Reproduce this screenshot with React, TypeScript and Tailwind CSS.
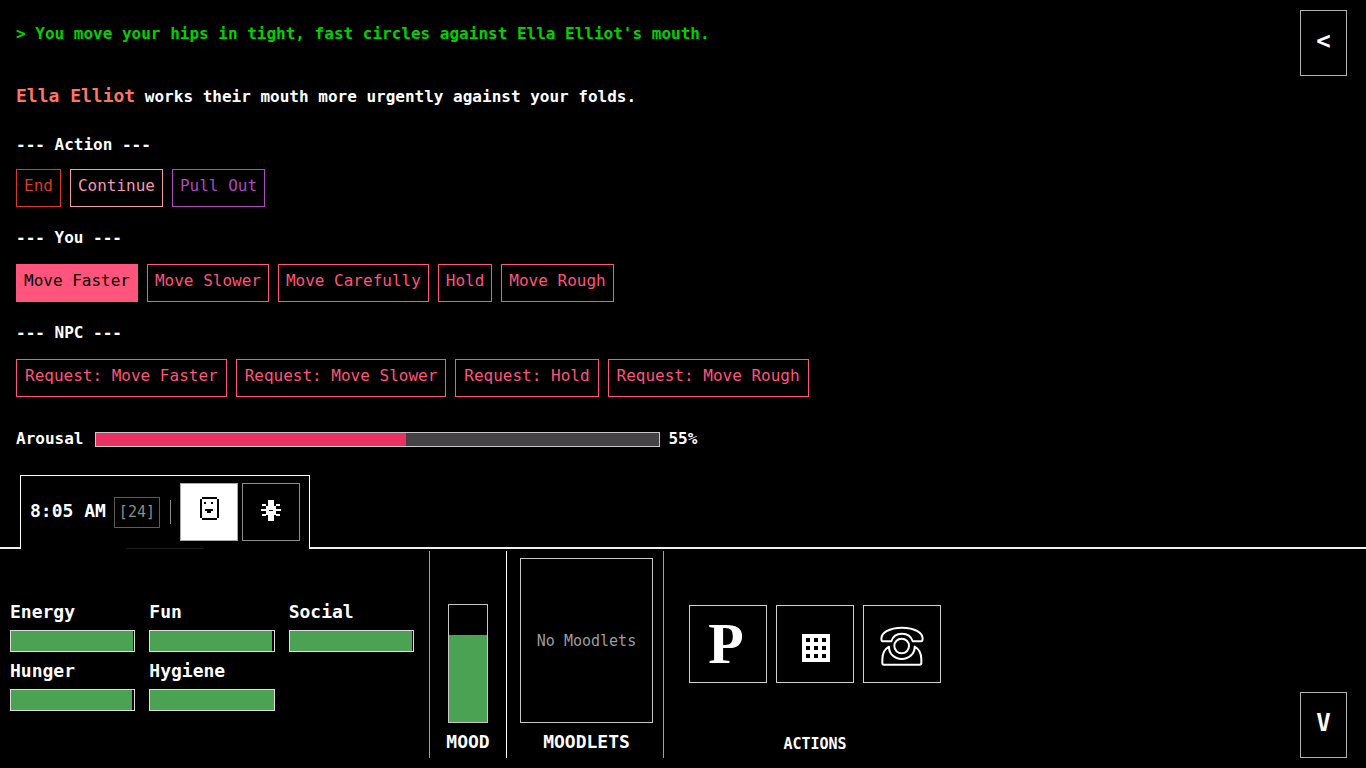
import { useState } from "react";
import clsx from "clsx";

const actions = [
  { label: "End", className: "border-[#d93a2b] text-[#d93a2b]" },
  { label: "Continue", className: "border-[#f29aae] text-[#f29aae]" },
  { label: "Pull Out", className: "border-[#ac4bbd] text-[#ac4bbd]" },
];

const youMoves = ["Move Faster", "Move Slower", "Move Carefully", "Hold", "Move Rough"];

const npcRequests = [
  "Request: Move Faster",
  "Request: Move Slower",
  "Request: Hold",
  "Request: Move Rough",
];

const needs = [
  { name: "Energy", value: 99 },
  { name: "Fun", value: 99 },
  { name: "Social", value: 99 },
  { name: "Hunger", value: 98 },
  { name: "Hygiene", value: 100 },
];

const moveButton = "h-[38px] border pb-1";

function FaceIcon() {
  return (
    <svg width="19" height="23" viewBox="0 0 19 23" shapeRendering="crispEdges" aria-hidden="true">
      <path
        fill="currentColor"
        d="M2 0h15v2h-15z M0 2h2v19h-2z M17 2h2v19h-2z M2 21h15v2h-15z M4 5h2v2h-2z M11 5h2v2h-2z M5 12h8v2h-8z M7 14h4v2h-4z"
      />
    </svg>
  );
}

function GearIcon() {
  return (
    <svg width="20" height="21" viewBox="0 0 20 21" shapeRendering="crispEdges" aria-hidden="true">
      <path
        fill="currentColor"
        fillRule="evenodd"
        d="M7 0h6v6h2v9h-2v6h-6v-6h-2v-9h2z M8 10v1h4v-1z M1 4h4v2h-4z M15 4h4v2h-4z M0 9h5v2h-5z M15 9h5v2h-5z M1 14h4v2h-4z M15 14h4v2h-4z"
      />
    </svg>
  );
}

function GridIcon() {
  return (
    <svg width="28" height="28" viewBox="0 0 7 7" shapeRendering="crispEdges" aria-hidden="true">
      <path
        fill="currentColor"
        d="M0 0h7v1h-7z M0 2h7v1h-7z M0 4h7v1h-7z M0 6h7v1h-7z M0 0h1v7h-1z M2 0h1v7h-1z M4 0h1v7h-1z M6 0h1v7h-1z"
      />
    </svg>
  );
}

function PhoneIcon() {
  return (
    <svg width="44" height="40" viewBox="0 0 132 120" fill="none" stroke="currentColor" strokeWidth="6" strokeLinejoin="round" aria-hidden="true">
      <path d="M5 44C-1 20 30 5 66 5s67 15 61 39q-1 2-4 2H98C94 32 82 23 66 23s-28 9-32 23H9q-3 0-4-2z" />
      <circle cx="65" cy="60" r="22" />
      <path d="M27 62C13 70 7 83 7 100v12q0 4 5 4h107q5 0 5-4v-12c0-17-6-30-20-38c0 22-17 37-39 37S27 84 27 62z" />
    </svg>
  );
}

function NeedBar({ name, value }: { name: string; value: number }) {
  return (
    <div>
      <div className="h-7 text-lg leading-5 font-bold">{name}</div>
      <div
        role="progressbar"
        aria-label={name}
        aria-valuenow={value}
        className="h-[22px] border border-[#dddddd]"
      >
        <div className="h-full bg-[#4aa252]" style={{ width: `${value}%` }} />
      </div>
    </div>
  );
}

export default function App() {
  const [move, setMove] = useState("Move Faster");
  const [tab, setTab] = useState("status");

  return (
    <div className="flex min-h-screen flex-col bg-black font-['DejaVu_Sans_Mono',monospace] text-base leading-6 text-white">
      <main className="flex flex-1 items-start pr-[19px] pl-4">
        <div className="flex-1 pt-[22px] pb-6">
          <p className="font-bold text-[#00d000]">
            &gt; You move your hips in tight, fast circles against Ella Elliot&apos;s mouth.
          </p>
          <p className="mt-[38px] font-bold">
            <span className="text-lg leading-6 text-[#ff7468]">Ella Elliot</span> works their mouth more
            urgently against your folds.
          </p>

          <h2 className="mt-6 mb-3 font-bold">--- Action ---</h2>
          <div className="flex flex-wrap gap-[9px]">
            {actions.map((a) => (
              <button key={a.label} className={clsx(moveButton, "px-[7px]", a.className)}>
                {a.label}
              </button>
            ))}
          </div>

          <h2 className="mt-[19px] mb-[14px] font-bold">--- You ---</h2>
          <div className="flex flex-wrap gap-[9px]">
            {youMoves.map((m) => (
              <button
                key={m}
                onClick={() => setMove(m)}
                className={clsx(
                  moveButton,
                  "border-[#ff547c] px-[7px]",
                  m === move ? "bg-[#ff547c] text-black" : "text-[#ff547c]"
                )}
              >
                {m}
              </button>
            ))}
          </div>

          <h2 className="mt-[19px] mb-[14px] font-bold">--- NPC ---</h2>
          <div className="flex flex-wrap gap-[9px]">
            {npcRequests.map((r) => (
              <button key={r} className={clsx(moveButton, "border-[#ff547c] px-2 text-[#ff547c]")}>
                {r}
              </button>
            ))}
          </div>

          <div className="mt-[30px] flex items-center">
            <span className="font-bold">Arousal</span>
            <div
              role="progressbar"
              aria-label="Arousal"
              aria-valuenow={55}
              className="mr-2 ml-3 h-[15px] max-w-[565px] flex-1 border border-[#c8c8c8] bg-[#444244]"
            >
              <div className="h-full bg-[#e93162]" style={{ width: "55%" }} />
            </div>
            <span className="font-bold">55%</span>
          </div>
        </div>

        <button className="mt-[10px] h-[66px] w-[47px] border border-[#b4b4b4] pb-1 text-2xl font-bold">
          &lt;
        </button>
      </main>

      {/* status tab, its open bottom covers the panel border */}
      <div className="relative -mb-[2px] ml-5 w-[290px] self-start border-x border-t border-white bg-black">
        <div className="flex items-center py-[7px] pr-[9px] pl-[9px]">
          <span className="pb-[2px] text-lg leading-6 font-bold">8:05 AM</span>
          <button className="ml-2 h-[31px] border border-[#5c5c5c] px-1 text-[15px] text-[#8c8c8c]">
            [24]
          </button>
          <div className="ml-[10px] h-6 w-px bg-[#8c8c8c]" />
          <div className="ml-auto flex gap-1">
            <button
              aria-label="Status"
              onClick={() => setTab("status")}
              className={clsx(
                "flex size-[58px] items-center justify-center border border-[#a8a8a8] pb-2",
                tab === "status" && "bg-white text-black"
              )}
            >
              <FaceIcon />
            </button>
            <button
              aria-label="Settings"
              onClick={() => setTab("settings")}
              className={clsx(
                "flex size-[58px] items-center justify-center border border-[#8c8c8c] pb-1",
                tab === "settings" && "bg-white text-black"
              )}
            >
              <GearIcon />
            </button>
          </div>
        </div>
        <div className="mx-auto h-px w-[77px] bg-[#1c1c1c]" />
      </div>

      <footer className="flex h-[221px] border-t-2 border-[#f0f0f0] pt-[2px] pb-[10px]">
        <section className="flex w-[430px] items-center border-r border-[#a0a0a0] pt-1 pr-[15px] pl-[10px]">
          <div className="grid w-full grid-cols-3 gap-x-[14px] gap-y-[9px]">
            {needs.map((n) => (
              <NeedBar key={n.name} name={n.name} value={n.value} />
            ))}
          </div>
        </section>

        <section className="flex w-[77px] flex-col items-center justify-end border-r border-white pb-1">
          <div
            role="progressbar"
            aria-label="Mood"
            aria-valuenow={74}
            className="flex h-[119px] w-10 items-end border border-[#c8c8c8]"
          >
            <div className="w-full bg-[#4aa252]" style={{ height: "74%" }} />
          </div>
          <h3 className="mt-[7px] text-lg leading-6 font-bold">MOOD</h3>
        </section>

        <section className="flex w-[157px] flex-col items-center border-r border-[#a0a0a0] pt-[7px] pb-1 pl-[3px]">
          <div className="flex w-[133px] flex-1 items-center justify-center border border-[#c8c8c8] text-[15px] text-[#9c9c9c]">
            No Moodlets
          </div>
          <h3 className="mt-[7px] text-lg leading-6 font-bold">MOODLETS</h3>
        </section>

        <section className="flex flex-col items-center justify-end pb-[2px] pl-[25px]">
          <div className="flex gap-[9px]">
            <button
              aria-label="Profile"
              className="flex size-[78px] items-center justify-center border border-[#d0d0d0] pr-1 font-['Liberation_Serif',serif] text-[58px] leading-none font-bold"
            >
              P
            </button>
            <button
              aria-label="Map"
              className="flex size-[78px] items-center justify-center border border-[#d0d0d0] pt-2 pl-[2px]"
            >
              <GridIcon />
            </button>
            <button
              aria-label="Phone"
              className="flex size-[78px] items-center justify-center border border-[#d0d0d0] pt-1"
            >
              <PhoneIcon />
            </button>
          </div>
          <h3 className="mt-[49px] text-[15px] leading-6 font-bold">ACTIONS</h3>
        </section>

        <button className="mr-[19px] ml-auto h-[66px] w-[47px] self-end border border-[#b4b4b4] pb-1 text-2xl font-bold">
          V
        </button>
      </footer>
    </div>
  );
}
